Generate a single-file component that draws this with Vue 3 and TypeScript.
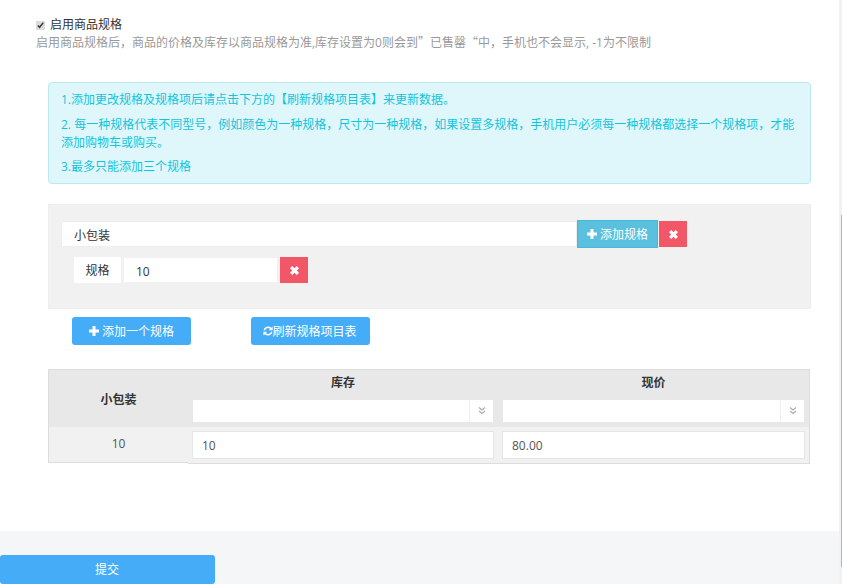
<script setup lang="ts">
const tips: string[] = [
  '1.添加更改规格及规格项后请点击下方的【刷新规格项目表】来更新数据。',
  '2. 每一种规格代表不同型号，例如颜色为一种规格，尺寸为一种规格，如果设置多规格，手机用户必须每一种规格都选择一个规格项，才能添加购物车或购买。',
  '3.最多只能添加三个规格',
]
</script>

<template>
  <div class="page">
    <main class="content">
      <label class="enable">
        <input type="checkbox" checked />
        <span>启用商品规格</span>
      </label>
      <p class="help">启用商品规格后，商品的价格及库存以商品规格为准,库存设置为0则会到<span class="cjk">”</span>已售罄<span class="cjk">“</span>中，手机也不会显示, -1为不限制</p>

      <div class="alert">
        <p v-for="tip in tips" :key="tip">{{ tip }}</p>
      </div>

      <section class="spec-panel">
        <div class="spec-row">
          <input class="spec-name" value="小包装" />
          <button class="btn-info" type="button">
            <svg viewBox="1 1 10 10" class="icon"><path d="M4.500 1h3v3.500H11v3H7.500V11h-3V7.500H1v-3h3.500z" fill="#fff" /></svg>
            添加规格
          </button>
          <button class="btn-del" type="button">
            <svg viewBox="1 1 10 10" class="icon-x"><path d="M1 3.500L3.500 1 6 3.500 8.500 1 11 3.500 8.500 6 11 8.500 8.500 11 6 8.500 3.500 11 1 8.500 3.500 6z" fill="#fff" /></svg>
          </button>
        </div>
        <div class="item-row">
          <span class="item-label">规格</span>
          <input class="item-input" value="10" />
          <button class="btn-del" type="button">
            <svg viewBox="1 1 10 10" class="icon-x"><path d="M1 3.500L3.500 1 6 3.500 8.500 1 11 3.500 8.500 6 11 8.500 8.500 11 6 8.500 3.500 11 1 8.500 3.500 6z" fill="#fff" /></svg>
          </button>
        </div>
      </section>

      <div class="actions">
        <button class="btn-primary" type="button">
          <svg viewBox="1 1 10 10" class="icon"><path d="M4.500 1h3v3.500H11v3H7.500V11h-3V7.500H1v-3h3.500z" fill="#fff" /></svg>
          添加一个规格
        </button>
        <button class="btn-primary refresh" type="button">
          <svg viewBox="0 0 12 12" class="icon-refresh"><path d="M.6 5.200A5.500 5.500 0 0 1 9.800 2.100L11.500.5v4.700H6.800l1.700-1.700A3.600 3.600 0 0 0 2.500 5.200zM11.400 6.800A5.500 5.500 0 0 1 2.200 9.900L.5 11.500V6.800h4.700L3.500 8.500a3.600 3.600 0 0 0 6-1.700z" fill="#fff" /></svg>刷新规格项目表
        </button>
      </div>

      <div class="spec-table">
        <div class="cell head-name">小包装</div>
        <div class="head-col">
          <div class="head-title">库存</div>
          <div class="select-box"><span></span><i><svg viewBox="0 0 10 10"><path d="M2 1.500l3 2.500 3-2.500M2 5l3 2.500L8 5" fill="none" stroke="#aaa" stroke-width="1.100" /></svg></i></div>
        </div>
        <div class="head-col">
          <div class="head-title">现价</div>
          <div class="select-box"><span></span><i><svg viewBox="0 0 10 10"><path d="M2 1.500l3 2.500 3-2.500M2 5l3 2.500L8 5" fill="none" stroke="#aaa" stroke-width="1.100" /></svg></i></div>
        </div>
        <div class="cell body-name">10</div>
        <div class="body-col"><input class="value-input" value="10" /></div>
        <div class="body-col"><input class="value-input" value="80.00" /></div>
      </div>
    </main>
    <footer class="footer">
      <button class="submit" type="button">提交</button>
    </footer>
    <div class="scrollbar"><div class="thumb"></div></div>
  </div>
</template>

<style>
html, body { margin: 0; padding: 0; overflow: hidden; background: #fff; }
</style>

<style scoped>
* { box-sizing: border-box; }
.page {
  width: 842px;
  height: 584px;
  position: relative;
  overflow: hidden;
  font-family: "Open Sans", "Noto Sans CJK SC", sans-serif;
  font-size: 12px;
  color: #333;
  background: #fff;
  display: flex;
  flex-direction: column;
}
.content { height: 531px; padding: 17px 0 0 36px; }
.enable { display: flex; align-items: center; height: 16px; color: #333; line-height: 16px; }
.enable input { width: 9px; height: 9px; margin: 0 5px 0 0; accent-color: #ddd; }
.help { margin: 0; height: 17px; line-height: 17px; color: #999; white-space: nowrap; }
.cjk { font-family: "Noto Sans CJK SC", sans-serif; }
.alert {
  margin: 32px 0 0 12px;
  width: 763px;
  height: 102px;
  padding: 8px 12px;
  background: #dff7fb;
  border: 1px solid #bce8f1;
  border-radius: 4px;
  color: #13c4dd;
  line-height: 18px;
}
.alert p { margin: 0 0 6.5px; }
.spec-panel {
  margin: 20px 0 0 12px;
  width: 763px;
  height: 105px;
  background: #f1f1f1;
  border: 1px solid #eee;
  padding: 16px 12px 0;
}
.spec-row { display: flex; align-items: center; height: 26px; }
.spec-name {
  width: 516px;
  height: 26px;
  padding: 2px 12px 0;
  border: 1px solid #eee;
  background: #fff;
  outline: none;
  font: inherit;
  color: #333;
}
.btn-info {
  width: 81px;
  height: 28px;
  border: 1px solid #46b8da;
  background: #5bc0de;
  color: #fff;
  font: inherit;
  padding: 0;
  margin-right: 1px;
  display: flex;
  align-items: center;
  justify-content: center;
  gap: 3px;
}
.btn-del {
  width: 28px;
  height: 26px;
  border: 0;
  padding: 0;
  background: #f25767;
  display: flex;
  align-items: center;
  justify-content: center;
}
.icon { width: 10px; height: 10px; }
.icon-x { width: 9px; height: 9px; }
.item-row { display: flex; align-items: center; height: 26px; margin: 10px 0 0 13px; }
.item-label {
  width: 47px;
  height: 26px;
  padding-top: 1px;
  line-height: 26px;
  text-align: center;
  background: #fff;
  margin-right: 2px;
}
.item-input {
  width: 155px;
  height: 26px;
  border: 1px solid #f1f1f1;
  background: #fff;
  outline: none;
  font: inherit;
  color: #333;
  padding: 2px 12px 0;
  margin-right: 2px;
}
.actions { display: flex; margin: 8px 0 0 36px; gap: 60px; }
.btn-primary {
  width: 119px;
  height: 28px;
  background: #45acf8;
  color: #fff;
  border: 0;
  border-radius: 3px;
  font: inherit;
  padding: 0;
  display: flex;
  align-items: center;
  justify-content: center;
  gap: 3px;
}
.refresh { gap: 0; padding-right: 1px; }
.icon-refresh { width: 10px; height: 10px; margin-right: -1px; }
.spec-table {
  margin: 24px 0 0 12px;
  width: 762px;
  height: 95px;
  border-top: 1px solid #ddd;
  border-right: 1px solid #ddd;
  display: grid;
  grid-template-columns: 140px 310px 1fr;
  grid-template-rows: 57px 37px;
  background: #fff;
}
.cell { display: flex; align-items: center; justify-content: center; border-left: 1px solid #ddd; }
.head-name { background: #e8e8e8; font-weight: 700; color: #333; }
.body-name { color: #555; background: #f1f1f1; height: 36px; padding-bottom: 2px; border-bottom: 1px solid #ddd; }
.head-col { background: #e8e8e8; padding: 0 5px; }
.head-title { height: 30px; line-height: 26px; text-align: center; font-weight: 700; }
.select-box {
  display: flex;
  height: 22px;
  background: #fff;
}
.select-box span { flex: 1; }
.select-box i {
  width: 24px;
  border-left: 1px solid #eee;
  display: flex;
  align-items: center;
  justify-content: center;
}
.select-box svg { width: 10px; height: 10px; }
.body-col { padding: 4px 4px 0; background: #f1f1f1; border-bottom: 1px solid #ddd; }
.value-input {
  display: block;
  width: 100%;
  height: 28px;
  border: 1px solid #e6e6e6;
  background: #fff;
  outline: none;
  font: inherit;
  color: #555;
  padding: 0 9px;
}
.footer { flex: 1; background: #f4f6f8; padding-top: 24px; }
.submit {
  width: 215px;
  height: 29px;
  background: #45acf8;
  color: #fff;
  border: 0;
  border-radius: 3px;
  font: inherit;
  padding: 0 1px 1px 0;
}
.scrollbar { position: absolute; top: 0; right: 0; width: 3px; height: 100%; background: #f1f1f1; }
.thumb { position: absolute; top: 215px; left: 2px; right: 0; height: 352px; background: #b5b5b5; }
</style>
